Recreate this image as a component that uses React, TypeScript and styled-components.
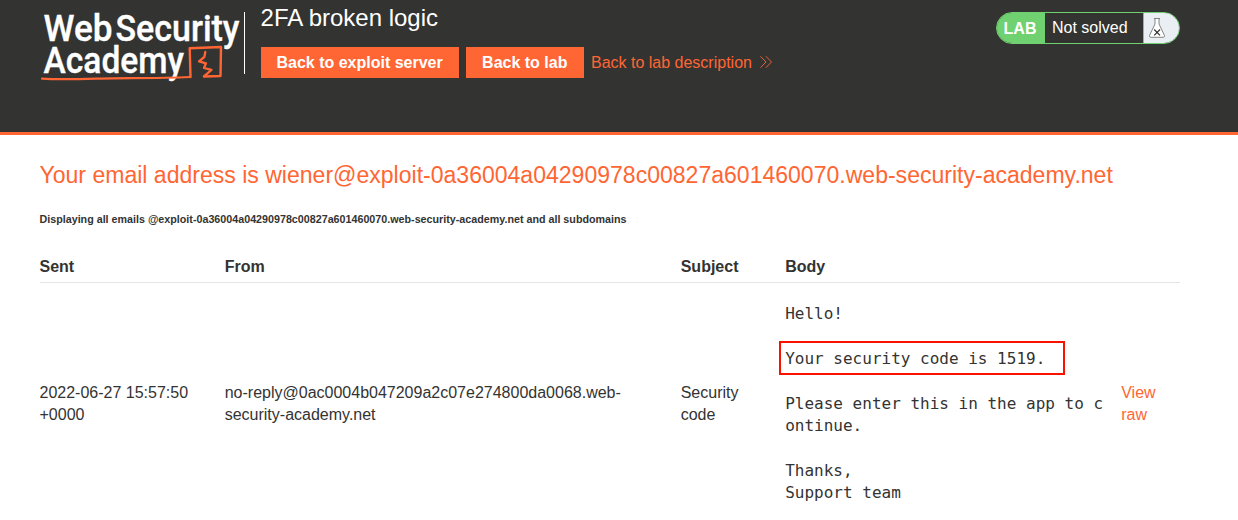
import React from "react";
import styled, { createGlobalStyle } from "styled-components";

const ORANGE = "#ff6633";
const DARK = "#333332";
const GREEN = "#6fd170";

const GlobalStyle = createGlobalStyle`
  *, *::before, *::after { box-sizing: border-box; }
  body {
    margin: 0;
    overflow: hidden;
    background: #fff;
    color: ${DARK};
    font: 16px/22.4px "Liberation Sans", Arial, sans-serif;
  }
`;

const Header = styled.header`
  display: flex;
  align-items: flex-start;
  height: 135px;
  padding: 0 58px 0 40px;
  background: ${DARK};
  border-bottom: 3px solid ${ORANGE};
`;

const Logo = styled.svg`
  flex: none;
  display: block;
  width: 204px;
  height: 90px;
  overflow: visible;
`;

const Divider = styled.div`
  width: 1px;
  height: 62px;
  margin-top: 12px;
  background: #fff;
`;

const TitleArea = styled.div`
  flex: 1;
  padding: 4px 0 0 15.6px;
`;

const Title = styled.h2`
  margin: 0 0 15px;
  color: #fff;
  font-size: 24px;
  font-weight: 400;
  line-height: 28px;
`;

const Actions = styled.div`
  display: flex;
  align-items: center;
  height: 31px;
`;

const Button = styled.a<{ $width: number }>`
  display: flex;
  align-items: center;
  justify-content: center;
  width: ${(p) => p.$width}px;
  height: 31px;
  padding-top: 1px;
  margin-right: 7.2px;
  background: ${ORANGE};
  color: #fff;
  font-weight: 700;
  white-space: nowrap;
`;

const TextLink = styled.a`
  color: ${ORANGE};
`;

const DescriptionLink = styled(TextLink)`
  padding-top: 1px;
`;

const Chevrons = styled.svg`
  width: 12px;
  height: 12px;
  margin: -1px 0 0 8.4px;
`;

const LabStatus = styled.div`
  display: flex;
  width: 184px;
  height: 32px;
  margin: 12px 0 0;
  overflow: hidden;
  border: 1px solid ${GREEN};
  border-radius: 16px;
  color: #fff;
  line-height: 30px;
`;

const LabTag = styled.span`
  width: 48px;
  padding-left: 6.6px;
  background: ${GREEN};
  font-weight: 700;
  line-height: 31px;
`;

const LabText = styled.span`
  width: 99px;
  padding-left: 7px;
  border-right: 1px solid ${GREEN};
`;

const LabIcon = styled.span`
  flex: 1;
  padding: 5px 0 0 5px;
  background: #eaeff3;
  svg { display: block; }
`;

const Main = styled.main`
  padding: 26px 58px 0 39.5px;
`;

const Heading = styled.h1`
  margin: 0;
  color: ${ORANGE};
  font-size: 23.04px;
  font-weight: 400;
  line-height: 28px;
  white-space: nowrap;
`;

const Note = styled.h6`
  margin: 22px 0 0;
  font-size: 10.72px;
  line-height: 16px;
`;

const Table = styled.div`
  margin-top: 24px;
`;

const Row = styled.div<{ $head?: boolean }>`
  display: grid;
  grid-template-columns: 185.2px 456px 104.5px 336px 1fr;
  align-items: center;
  height: ${(p) => (p.$head ? 32 : 243)}px;
  padding-top: ${(p) => (p.$head ? 1 : 0)}px;
  border-bottom: 1px solid #e4e4e4;
  font-weight: ${(p) => (p.$head ? 700 : 400)};
`;

const Cell = styled.div<{ $right?: number }>`
  padding-right: ${(p) => p.$right ?? 0}px;
`;

const Message = styled.pre`
  margin: 0;
  width: 325px;
  font: 16px/22.4px "DejaVu Sans Mono", monospace;
  white-space: pre-wrap;
  word-break: break-all;
`;

const Highlighted = styled.span`
  position: relative;
  &::after {
    content: "";
    position: absolute;
    top: -8px;
    left: -6px;
    width: 286px;
    height: 34px;
    border: 2px solid #f91200;
  }
`;

const logoType = {
  fill: "#fff",
  stroke: "#fff",
  strokeWidth: 0.35,
  fontFamily: "Roboto, sans-serif",
  fontWeight: 500,
  lengthAdjust: "spacingAndGlyphs",
} as const;

export default function App() {
  return (
    <>
      <GlobalStyle />
      <Header>
        <Logo viewBox="40 0 204 90">
          <text {...logoType} x="43.5" y="40.5" fontSize="37.5" textLength="69">Web</text>
          <text {...logoType} x="115.5" y="40.5" fontSize="37.5" textLength="124">Security</text>
          <text {...logoType} x="43.5" y="73" fontSize="37" textLength="140.5">Academy</text>
          <g fill="none" stroke={ORANGE} strokeLinejoin="round" strokeLinecap="round">
            <path d="M42 78.7C60 79.8 78 79.2 100 78.6C130 78 157 78.4 190 77" strokeWidth="2.2" />
            <path d="M190.5 77L189.7 48.2L221 47L220.5 76L204 76.5" strokeWidth="2.4" />
            <path d="M205.3 52L204.3 57L199 61.3L206 63.3L204 68L211.5 69.8L204 76.3" strokeWidth="2.3" />
          </g>
        </Logo>
        <Divider />
        <TitleArea>
          <Title>2FA broken logic</Title>
          <Actions>
            <Button $width={198}>Back to exploit server</Button>
            <Button $width={118}>Back to lab</Button>
            <DescriptionLink>Back to lab description</DescriptionLink>
            <Chevrons viewBox="0 0 12 12" fill="none" stroke={ORANGE} strokeWidth="0.9">
              <path d="M.5 .3L6 6L.5 11.7M6 .3L11.5 6L6 11.7" />
            </Chevrons>
          </Actions>
        </TitleArea>
        <LabStatus>
          <LabTag>LAB</LabTag>
          <LabText>Not solved</LabText>
          <LabIcon>
            <svg width="16" height="20" viewBox="0 0 16 20" fill="#fff">
              <path d="M5 .5H11M6 .5V6L.5 17.5Q.3 19.3 1.5 19.3H14.5Q15.7 19.3 15.5 17.5L10 6V.5" stroke="#777" strokeWidth=".9" />
              <path d="M5.2 11.5L11 17.3M11 11.5L5.2 17.3" stroke="#333" strokeWidth="1.2" />
            </svg>
          </LabIcon>
        </LabStatus>
      </Header>
      <Main>
        <Heading>
          Your email address is wiener@exploit-0a36004a04290978c00827a601460070.web-security-academy.net
        </Heading>
        <Note>
          Displaying all emails @exploit-0a36004a04290978c00827a601460070.web-security-academy.net and all subdomains
        </Note>
        <Table>
          <Row $head>
            <Cell>Sent</Cell>
            <Cell>From</Cell>
            <Cell>Subject</Cell>
            <Cell>Body</Cell>
          </Row>
          <Row>
            <Cell $right={30}>2022-06-27 15:57:50 +0000</Cell>
            <Cell $right={50}>no-reply@0ac0004b047209a2c07e274800da0068.web-security-academy.net</Cell>
            <Cell $right={30}>Security code</Cell>
            <Message>
              {"Hello!\n\n"}
              <Highlighted>Your security code is 1519.</Highlighted>
              {"\n\nPlease enter this in the app to continue.\n\nThanks,\nSupport team"}
            </Message>
            <Cell $right={20}><TextLink>View raw</TextLink></Cell>
          </Row>
        </Table>
      </Main>
    </>
  );
}
